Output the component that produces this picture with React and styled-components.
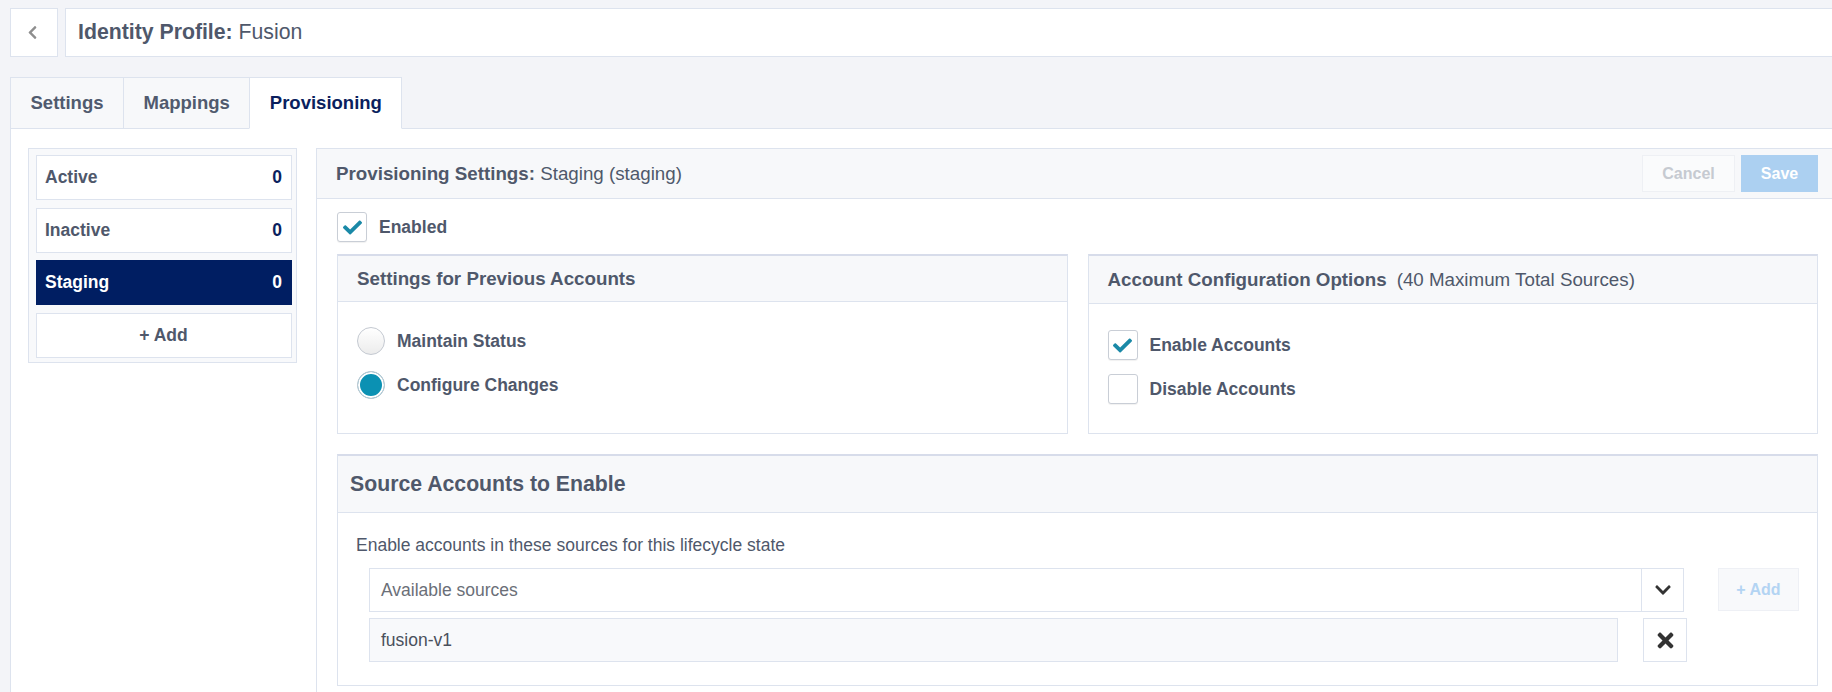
import React from "react";
import styled, { createGlobalStyle } from "styled-components";
import { FaChevronLeft, FaChevronDown, FaTimes, FaCheck } from "react-icons/fa";

const GlobalStyle = createGlobalStyle`
  html, body {
    margin: 0;
    overflow: hidden;
    background: #f3f4f8;
  }
  body {
    font-family: "Liberation Sans", Arial, sans-serif;
    color: #4f586b;
  }
  * {
    box-sizing: border-box;
  }
`;

const states = [
  { name: "Active", count: 0 },
  { name: "Inactive", count: 0 },
  { name: "Staging", count: 0, selected: true },
];

const tabs = [
  { label: "Settings" },
  { label: "Mappings" },
  { label: "Provisioning", active: true },
];

class App extends React.Component {
  render() {
    return (
      <>
        <GlobalStyle />
        <Page>
          {/* top bar */}
          <TopBar>
            <BackButton>
              <FaChevronLeft size={15} />
            </BackButton>
            <TitleBox>
              <b>Identity Profile:</b>&nbsp;Fusion
            </TitleBox>
          </TopBar>

          <TabBar>
            {tabs.map((t) => (
              <Tab key={t.label} $active={t.active}>
                {t.label}
              </Tab>
            ))}
          </TabBar>

          <TabPane>
            <Sidebar>
              {states.map((s) => (
                <StateItem key={s.name} $selected={s.selected}>
                  <span>{s.name}</span>
                  <Count $selected={s.selected}>{s.count}</Count>
                </StateItem>
              ))}
              <AddState>+ Add</AddState>
            </Sidebar>

            <Main>
              <MainHeader>
                <span>
                  <b>Provisioning Settings:</b> Staging (staging)
                </span>
                <HeaderActions>
                  <CancelButton>Cancel</CancelButton>
                  <SaveButton>Save</SaveButton>
                </HeaderActions>
              </MainHeader>

              <MainBody>
                <CheckRow>
                  <Checkbox>
                    <FaCheck size={19} />
                  </Checkbox>
                  Enabled
                </CheckRow>

                <OptionsGrid>
                  <Box>
                    <BoxHeader>Settings for Previous Accounts</BoxHeader>
                    <BoxBody $gap={16} $top={25} $bottom={30}>
                      <CheckRow>
                        <Radio />
                        Maintain Status
                      </CheckRow>
                      <CheckRow>
                        <Radio $checked />
                        Configure Changes
                      </CheckRow>
                    </BoxBody>
                  </Box>

                  <Box>
                    <BoxHeader $tall>
                      Account Configuration Options
                      <Note>(40 Maximum Total Sources)</Note>
                    </BoxHeader>
                    <BoxBody $gap={14} $top={26} $bottom={29}>
                      <CheckRow>
                        <Checkbox>
                          <FaCheck size={19} />
                        </Checkbox>
                        Enable Accounts
                      </CheckRow>
                      <CheckRow>
                        <Checkbox />
                        Disable Accounts
                      </CheckRow>
                    </BoxBody>
                  </Box>
                </OptionsGrid>

                <SourceBox>
                  <SourceHeader>Source Accounts to Enable</SourceHeader>
                  <SourceBody>
                    <Desc>
                      Enable accounts in these sources for this lifecycle state
                    </Desc>
                    <SourceList>
                      <SelectRow>
                        <Select>
                          <SelectText>Available sources</SelectText>
                          <SelectToggle>
                            <FaChevronDown size={18} />
                          </SelectToggle>
                        </Select>
                        <AddButton>+ Add</AddButton>
                      </SelectRow>
                      <ItemRow>
                        <SourceItem>fusion-v1</SourceItem>
                        <RemoveButton>
                          <FaTimes size={23} />
                        </RemoveButton>
                      </ItemRow>
                    </SourceList>
                  </SourceBody>
                </SourceBox>
              </MainBody>
            </Main>
          </TabPane>
        </Page>
      </>
    );
  }
}

const Page = styled.div`
  width: 1868px;
  padding: 8px 0 0 10px;
`;

const TopBar = styled.div`
  display: flex;
  gap: 7px;
  height: 49px;
`;

const BackButton = styled.div`
  width: 48px;
  display: flex;
  align-items: center;
  justify-content: center;
  padding-right: 4px;
  background: #fff;
  border: 1px solid #dde3ee;
  color: #8e8e8e;
`;

const TitleBox = styled.div`
  flex: 1;
  display: flex;
  align-items: center;
  padding-left: 12px;
  background: #fff;
  border: 1px solid #dde3ee;
  font-size: 21.25px;
  color: #4f586b;
`;

const TabBar = styled.div`
  display: flex;
  margin-top: 20px;
  position: relative;
  z-index: 1;
`;

const Tab = styled.div`
  height: 52px;
  display: flex;
  align-items: center;
  padding: 0 19.5px;
  margin-left: -1px;
  font-size: 18.5px;
  font-weight: 700;
  border: 1px solid #dde3ee;
  border-bottom-color: ${(p) => (p.$active ? "#fff" : "#dde3ee")};
  background: ${(p) => (p.$active ? "#fff" : "#f7f8fa")};
  color: ${(p) => (p.$active ? "#0b1f5e" : "#505a6e")};

  &:first-child {
    margin-left: 0;
  }
`;

const TabPane = styled.div`
  margin-top: -1px;
  display: flex;
  gap: 19px;
  min-height: 700px;
  padding: 19px 28px 20px 17px;
  background: #fff;
  border: 1px solid #dde3ee;
`;

const Sidebar = styled.div`
  width: 269px;
  align-self: flex-start;
  display: flex;
  flex-direction: column;
  gap: 7.5px;
  padding: 6px 4px 4px 7px;
  background: #f8f9fb;
  border: 1px solid #dde3ee;
`;

const StateItem = styled.div`
  height: 45px;
  display: flex;
  align-items: center;
  justify-content: space-between;
  padding: 0 9px 0 8px;
  font-size: 17.5px;
  font-weight: 700;
  background: ${(p) => (p.$selected ? "#001e62" : "#fff")};
  border: 1px solid ${(p) => (p.$selected ? "#001e62" : "#dde3ee")};
  color: ${(p) => (p.$selected ? "#fff" : "#4f586b")};
`;

const Count = styled.span`
  color: ${(p) => (p.$selected ? "#fff" : "#0b1f5e")};
`;

const AddState = styled(StateItem)`
  justify-content: center;
`;

const Main = styled.div`
  flex: 1;
  background: #fff;
  border: 1px solid #dde3ee;
`;

const MainHeader = styled.div`
  height: 50px;
  display: flex;
  align-items: center;
  justify-content: space-between;
  padding: 0 20px 0 19px;
  background: #f7f8fa;
  border-bottom: 1px solid #dde3ee;
  font-size: 18.75px;
  color: #4f586b;

  b {
    font-weight: 700;
  }
`;

const HeaderActions = styled.div`
  display: flex;
  gap: 6px;
`;

const CancelButton = styled.div`
  width: 93px;
  height: 37px;
  display: flex;
  align-items: center;
  justify-content: center;
  background: #fafbfc;
  border: 1px solid #eef0f4;
  color: #c6cad1;
  font-size: 16px;
  font-weight: 700;
`;

const SaveButton = styled(CancelButton)`
  width: 77px;
  background: #acd0f1;
  border-color: #acd0f1;
  color: #fff;
`;

const MainBody = styled.div`
  padding: 13px 20px 20px 20px;
`;

const CheckRow = styled.div`
  display: flex;
  align-items: center;
  gap: 12px;
  font-size: 17.5px;
  font-weight: 700;
  color: #4f586b;
`;

const Checkbox = styled.div`
  width: 30px;
  height: 30px;
  display: flex;
  align-items: center;
  justify-content: center;
  background: #fff;
  border: 1px solid #c9ced6;
  border-radius: 3px;
  box-shadow: 0 1px 1px rgba(0, 0, 0, 0.06);
  color: #1a89a7;
`;

const Radio = styled.div`
  width: 28px;
  height: 28px;
  border-radius: 50%;
  border: 1px solid #c4c9d1;
  background: ${(p) =>
    p.$checked ? "#0b91b3" : "linear-gradient(#ffffff, #ececec)"};
  box-shadow: ${(p) => (p.$checked ? "inset 0 0 0 2px #fff" : "none")};
`;

const OptionsGrid = styled.div`
  display: grid;
  grid-template-columns: 1fr 1fr;
  gap: 20px;
  margin-top: 12px;
`;

const Box = styled.div`
  background: #fff;
  border: 1px solid #dde3ee;
  border-top: 2px solid #d7dcea;
`;

const BoxHeader = styled.div`
  height: ${(p) => (p.$tall ? "48px" : "46px")};
  display: flex;
  align-items: center;
  padding: 0 19px;
  background: #f7f8fa;
  border-bottom: 1px solid #dde3ee;
  font-size: 18.75px;
  font-weight: 700;
  color: #4f586b;
`;

const Note = styled.span`
  margin-left: 10px;
  font-weight: 400;
`;

const BoxBody = styled.div`
  display: flex;
  flex-direction: column;
  gap: ${(p) => p.$gap}px;
  padding: ${(p) => p.$top}px 19px ${(p) => p.$bottom}px;
`;

const SourceBox = styled(Box)`
  margin-top: 20px;
`;

const SourceHeader = styled.div`
  height: 57px;
  display: flex;
  align-items: center;
  padding-left: 12px;
  background: #f7f8fa;
  border-bottom: 1px solid #dde3ee;
  font-size: 21.25px;
  font-weight: 700;
  color: #4f586b;
`;

const SourceBody = styled.div`
  padding: 21px 18px 23px 18px;
`;

const Desc = styled.div`
  font-size: 17.5px;
  line-height: 22px;
  color: #4f586b;
`;

const SourceList = styled.div`
  display: flex;
  flex-direction: column;
  gap: 6px;
  margin: 12px 0 0 13px;
`;

const SelectRow = styled.div`
  display: flex;
  align-items: flex-start;
  gap: 34px;
`;

const Select = styled.div`
  flex: 1;
  height: 44px;
  display: flex;
  background: #fff;
  border: 1px solid #dde3ee;
`;

const SelectText = styled.div`
  flex: 1;
  display: flex;
  align-items: center;
  padding-left: 11px;
  font-size: 17.5px;
  color: #6b6f78;
`;

const SelectToggle = styled.div`
  width: 42px;
  display: flex;
  align-items: center;
  justify-content: center;
  border-left: 1px solid #dde3ee;
  color: #333;
`;

const AddButton = styled.div`
  width: 81px;
  height: 43px;
  display: flex;
  align-items: center;
  justify-content: center;
  background: #f8f9fb;
  border: 1px solid #eef0f5;
  color: #b3d4f3;
  font-size: 16px;
  font-weight: 700;
`;

const ItemRow = styled.div`
  display: flex;
  gap: 25px;
  padding-right: 112px;
`;

const SourceItem = styled.div`
  flex: 1;
  height: 44px;
  display: flex;
  align-items: center;
  padding-left: 11px;
  background: #f8f9fb;
  border: 1px solid #dde3ee;
  font-size: 17.5px;
  color: #4a505c;
`;

const RemoveButton = styled.div`
  width: 44px;
  height: 44px;
  display: flex;
  align-items: center;
  justify-content: center;
  background: #fff;
  border: 1px solid #dde3ee;
  color: #333;
`;

export default App;
